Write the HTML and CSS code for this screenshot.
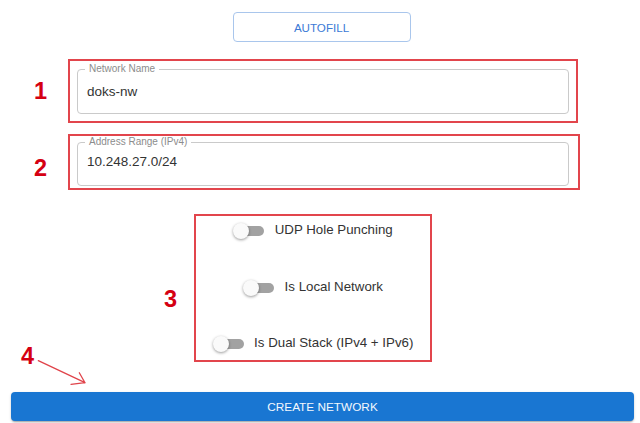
FILE: index.html
```html
<!DOCTYPE html>
<html>
<head>
<meta charset="utf-8">
<link rel="stylesheet" href="styles.css">
</head>
<body>
<div class="page">
  <div class="top">
    <button class="btn-outline">AUTOFILL</button>
  </div>

  <div class="anno-row row-1">
    <span class="num">1</span>
    <div class="mark mark-1">
      <div class="field field-1">
        <span class="field-label">Network Name</span>
        <span class="field-value">doks-nw</span>
      </div>
    </div>
  </div>

  <div class="anno-row row-2">
    <span class="num num-2">2</span>
    <div class="mark mark-2">
      <div class="field field-2">
        <span class="field-label">Address Range (IPv4)</span>
        <span class="field-value">10.248.27.0/24</span>
      </div>
    </div>
  </div>

  <div class="anno-row row-3">
    <span class="num num-3">3</span>
    <div class="mark mark-3">
      <div class="toggle-row">
        <span class="switch"><span class="track"></span><span class="thumb"></span></span>
        <span class="toggle-label">UDP Hole Punching</span>
      </div>
      <div class="toggle-row">
        <span class="switch"><span class="track"></span><span class="thumb"></span></span>
        <span class="toggle-label">Is Local Network</span>
      </div>
      <div class="toggle-row">
        <span class="switch"><span class="track"></span><span class="thumb"></span></span>
        <span class="toggle-label">Is Dual Stack (IPv4 + IPv6)</span>
      </div>
    </div>
  </div>

  <div class="bottom">
    <button class="btn-primary">CREATE NETWORK</button>
  </div>

  <span class="num num-4">4</span>
  <svg class="arrow" width="100" height="50" viewBox="0 0 100 50">
    <path d="M38.3 20.7 L85 42.7 M79.3 32.7 L85 42.7 L71 44.3" fill="none" stroke="#e0434a" stroke-width="1.3" stroke-linecap="round" stroke-linejoin="round"/>
  </svg>
</div>
</body>
</html>
```

FILE: styles.css
```css
* { box-sizing: border-box; }

html, body {
  margin: 0;
  padding: 0;
  background: #ffffff;
}

body {
  font-family: "Liberation Sans", Arial, sans-serif;
  color: #333;
}

.page {
  position: relative;
  width: 640px;
  height: 423px;
  overflow: hidden;
  display: flex;
  flex-direction: column;
  padding-top: 12px;
}

.top {
  display: flex;
  justify-content: center;
  padding-left: 3px;
}

.btn-outline {
  width: 178px;
  height: 30px;
  border: 1px solid #a9c6ec;
  border-radius: 4px;
  background: #fff;
  color: #3b7ad6;
  font-family: "Liberation Sans", Arial, sans-serif;
  font-size: 11.6px;
  padding: 0;
  margin: 0;
}

.anno-row {
  display: flex;
  align-items: center;
}

.num {
  display: block;
  width: 25px;
  height: 23px;
  line-height: 23px;
  text-align: center;
  font-family: "Liberation Sans", Arial, sans-serif;
  font-weight: bold;
  font-size: 23.5px;
  color: #d50012;
}

.row-1 {
  padding-left: 28px;
  gap: 15px;
  margin-top: 17px;
}

.row-2 {
  padding-left: 28px;
  gap: 15px;
  margin-top: 11px;
}

.num-2 { margin-top: 12px; }

.row-3 {
  padding-left: 158px;
  gap: 11px;
  margin-top: 24px;
}

.num-3 { margin-top: 22px; }

.mark {
  border: 2px solid #e2454c;
}

.mark-1 {
  width: 510px;
  padding: 8px 7px 7px 7px;
}

.mark-2 {
  width: 512px;
  padding: 6px 9px 2px 7px;
}

.field {
  position: relative;
  width: 492px;
  border: 1px solid #cacaca;
  border-radius: 4px;
  padding: 14px 9px 13px 9px;
}

.field-2 {
  padding: 11px 9px 15px 9px;
}

.field-label {
  position: absolute;
  left: 7px;
  top: -7px;
  padding: 0 4px;
  background: #fff;
  font-size: 10px;
  line-height: 12px;
  color: #8c8c8c;
}

.field-value {
  display: block;
  font-size: 13.5px;
  line-height: 16px;
  color: #333;
}

.mark-3 {
  width: 238px;
  padding: 5px 0 6px 0;
  display: flex;
  flex-direction: column;
  gap: 36.5px;
}

.toggle-row {
  display: flex;
  justify-content: center;
  align-items: center;
  gap: 10.5px;
  height: 20px;
}

.switch {
  position: relative;
  display: block;
  width: 31px;
  height: 20px;
  flex: none;
}

.track {
  position: absolute;
  left: 5px;
  top: 5px;
  width: 26px;
  height: 10px;
  border-radius: 5px;
  background: #a2a2a2;
}

.thumb {
  position: absolute;
  left: 0;
  top: 2px;
  width: 16px;
  height: 16px;
  border-radius: 50%;
  background: #fafafa;
  box-shadow: 0 1px 3px rgba(0, 0, 0, 0.4);
}

.toggle-label {
  font-size: 13.3px;
  line-height: 16px;
  color: #333;
  padding-bottom: 2px;
}

.bottom {
  display: flex;
  padding: 0 6px 0 11px;
  margin-top: 30px;
}

.btn-primary {
  width: 623px;
  height: 29px;
  border: none;
  border-radius: 4px;
  background: #1976d2;
  color: #f4f8fd;
  font-family: "Liberation Sans", Arial, sans-serif;
  font-size: 11.8px;
  padding: 0;
  margin: 0;
  box-shadow: 0 2px 2px -1px rgba(0, 0, 0, 0.3), 0 1px 3px rgba(0, 0, 0, 0.15);
}

.num-4 {
  position: absolute;
  left: 15px;
  top: 345px;
}

.arrow {
  position: absolute;
  left: 0;
  top: 340px;
}
```
